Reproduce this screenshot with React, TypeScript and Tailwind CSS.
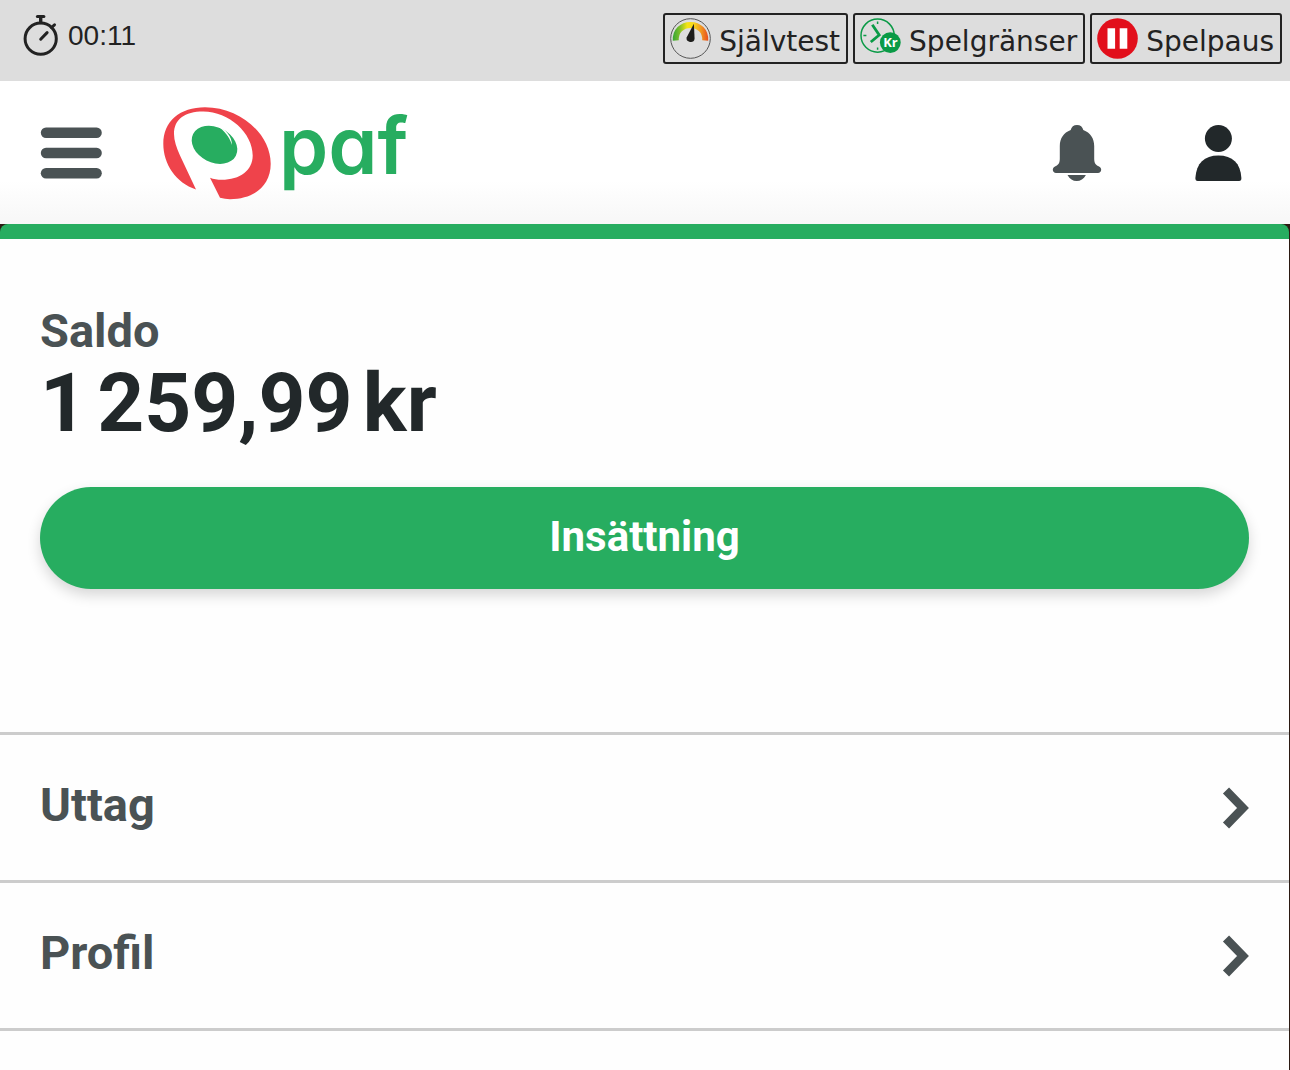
import React from 'react';

// icons
const StopwatchIcon: React.FC = () => (
    <svg width="38" height="44" viewBox="22 14 38 44" fill="none" stroke="#222" strokeWidth="3" strokeLinecap="round" aria-hidden="true">
        <circle cx="40.7" cy="38.7" r="15.6" />
        <path d="M37.4 16.5h6.5" />
        <path d="M40.7 17v5.5" strokeWidth="3.4" />
        <path d="M40.7 39.2l6.4-6.6" />
        <path d="M51.5 27.5l3-2.7" />
    </svg>
)

const GaugeIcon: React.FC = () => (
    <svg width="41" height="41" viewBox="0 0 41 41" fill="none" aria-hidden="true">
        <defs>
            <linearGradient id="gauge" x1="2" y1="0" x2="38" y2="0" gradientUnits="userSpaceOnUse">
                <stop offset="0" stopColor="#2fa336" />
                <stop offset="0.22" stopColor="#7fbf2a" />
                <stop offset="0.42" stopColor="#f4e414" />
                <stop offset="0.6" stopColor="#f8d71a" />
                <stop offset="0.8" stopColor="#f19a22" />
                <stop offset="1" stopColor="#e8501f" />
            </linearGradient>
        </defs>
        <circle cx="20.5" cy="20.5" r="19.8" stroke="#555" strokeWidth="1" />
        <path d="M5.8 22.5C5.2 13 12 6.9 20.5 6.9S35.8 13 35.2 22.5" stroke="url(#gauge)" strokeWidth="6" />
        <path d="M23.9 5.8L24.6 20.8a4 3.7 0 0 1-8-1.2z" fill="#1d1d1b" />
    </svg>
)

const LimitsIcon: React.FC = () => (
    <svg width="41" height="41" viewBox="0 0 41 41" fill="none" aria-hidden="true">
        <circle cx="17.6" cy="17.6" r="16.6" stroke="#0a9a46" strokeWidth="1.5" />
        <path d="M17.6 3.5v2.6M17.6 29.4v2.4M3.4 17.6h3M29.2 17.6h2" stroke="#0a9a46" strokeWidth="1.5" />
        <path d="M12.3 6.8L19.2 17 10.8 24" stroke="#0a9a46" strokeWidth="2.8" />
        <circle cx="30.3" cy="24.6" r="10.4" fill="#0a9a46" />
        <text x="30.4" y="29.2" textAnchor="middle" fill="#fff" fontSize="13" fontWeight="700" fontFamily="Open Sans, sans-serif">Kr</text>
    </svg>
)

const PauseIcon: React.FC = () => (
    <svg width="41" height="41" viewBox="0 0 41 41" aria-hidden="true">
        <circle cx="20.5" cy="20.5" r="20.3" fill="#e20f1b" />
        <path d="M10.5 10.3h7.6v20.4h-7.6zM22.7 10.3h7.6v20.4h-7.6z" fill="#fff" />
    </svg>
)

const MenuIcon: React.FC = () => (
    <svg width="62" height="52" viewBox="0 0 62 52" fill="#4a5254" aria-hidden="true">
        <rect x="0.8" y="0.5" width="61" height="10.4" rx="5.2" />
        <rect x="0.8" y="20.8" width="61" height="10.4" rx="5.2" />
        <rect x="0.8" y="41.1" width="61" height="10.4" rx="5.2" />
    </svg>
)

const BellIcon: React.FC = () => (
    <svg width="50" height="56" viewBox="0 0 50 56" fill="#4a5254" aria-hidden="true">
        <path d="M25 0c3.4 0 5.6 1.9 6.3 5C38.4 7.6 42.2 13.5 42.2 21v12.5c0 4.2 1.2 6.500 4.400 7.800 1.800.7 2.600 2 2.600 3.500 0 1.900-1.400 3.200-3.200 3.200H4c-1.800 0-3.200-1.300-3.200-3.200 0-1.500.8-2.800 2.600-3.500C6.600 40 7.800 37.700 7.800 33.500V21c0-7.500 3.800-13.400 10.900-16C19.400 1.900 21.600 0 25 0z" />
        <path d="M15.5 50h18.400c-2.300 4-5.400 6-9.200 6s-6.900-2-9.200-6z" />
    </svg>
)

const UserIcon: React.FC = () => (
    <svg width="47" height="56" viewBox="0 0 47 56" fill="#22282a" aria-hidden="true">
        <circle cx="23.4" cy="13.5" r="13.5" />
        <path d="M23.4 30.5C37.5 30.5 45.5 38 46.4 53c.1 2-.7 3-2.3 3H2.7C1.1 56 .3 55 .4 53 1.3 38 9.3 30.5 23.4 30.5z" />
    </svg>
)

const ChevronIcon: React.FC = () => (
    <svg width="27" height="42" viewBox="0 0 27 42" fill="none" stroke="#4a5254" strokeWidth="8.5" aria-hidden="true">
        <path d="M4 3.5L21 21 4 38.5" />
    </svg>
)

const Logo: React.FC = () => (
    <svg width="256" height="116" viewBox="0 -8 256 116" role="img" aria-label="paf">
        <path
            d="M34 86.5C14 80 1.3 61 1.3 40.8 1.3 18 18 4.2 43 4.2c35 0 65.7 26.8 65.7 56.6C108.7 83 92 96.2 68 96.2q-5 0-10-1.4L48 74.8c3.5 1.5 7.5 2 11.7 2C78 76.8 90.7 67.5 90.7 52.5 90.7 30 67 8.5 41.3 8.5 22.5 8.5 12 16.5 12 31c0 6.5 2.5 13.5 6 21.5z"
            fill="#ef434b"
        />
        <ellipse cx="52.5" cy="41.8" rx="24" ry="17.6" fill="#27ad60" transform="rotate(27 52.5 41.8)" />
        <path d="M55 22.5C64 26 69.8 33.5 70 42 67 33 63 28.5 55 22.5z" fill="#fff" />
        <text x="117" y="71" fill="#27ad60" fontSize="79" fontWeight="600" className="font-['Inter',sans-serif] [font-feature-settings:'cv11']">paf</text>
    </svg>
)

const tools = [
    { label: 'Självtest', icon: <GaugeIcon /> },
    { label: 'Spelgränser', icon: <LimitsIcon /> },
    { label: 'Spelpaus', icon: <PauseIcon /> },
]

const links = ['Uttag', 'Profil'];

const App: React.FC = () => {
    return (
        <div className="flex min-h-screen flex-col bg-[#2b1a12] font-['Roboto',sans-serif] text-[#4a5254]">
            <section className="flex h-[81px] items-start justify-between bg-[#ddd] pr-2 pl-[22px] text-[#222]">
                <div className="flex items-center gap-2 pt-[14px] font-['Liberation_Sans',sans-serif] text-[28px] leading-[44px]">
                    <StopwatchIcon />
                    <span>00:11</span>
                </div>
                <nav className="flex gap-[5px] pt-[13px] font-['DejaVu_Sans',sans-serif] text-[28px] [font-kerning:none]">
                    {tools.map((tool) => (
                        <a key={tool.label} href="#" className="flex h-[51px] items-start gap-2 rounded-[3px] border-2 border-[#222] pt-[3px] pr-[6px] pl-[5px]">
                            {tool.icon}
                            <span className="pt-1 leading-[40px]">{tool.label}</span>
                        </a>
                    ))}
                </nav>
            </section>

            <header className="flex h-[143px] items-center justify-between bg-linear-to-b from-white from-70% to-[#f7f7f7] pr-12 pl-10">
                <div className="flex items-center gap-[60px]">
                    <button type="button" aria-label="Meny">
                        <MenuIcon />
                    </button>
                    <a href="#">
                        <Logo />
                    </a>
                </div>
                <div className="flex items-center gap-[93px]">
                    <button type="button" aria-label="Meddelanden">
                        <BellIcon />
                    </button>
                    <button type="button" aria-label="Konto">
                        <UserIcon />
                    </button>
                </div>
            </header>

            <main className="mr-px flex-1 rounded-t-lg border-t-[15px] border-[#27ad60] bg-[#fefefe]">
                <section className="px-10 pt-16 pb-[143px]">
                    <h2 className="text-[47px] leading-[56px] font-bold">Saldo</h2>
                    <p className="text-[82px] leading-[88px] font-bold text-[#22282a]">1&#8239;259,99&#8239;kr</p>
                    <button type="button" className="mt-10 h-[102px] w-full rounded-full bg-[#27ad60] pb-1 text-[42px] font-bold text-white shadow-[0_6px_14px_rgba(0,0,0,0.16)]">
                        Insättning
                    </button>
                </section>
                <nav className="border-b-[3px] border-[#ccc]">
                    {links.map((link) => (
                        <a key={link} href="#" className="flex h-[148px] items-center justify-between border-t-[3px] border-[#ccc] px-10 text-[47px] font-bold">
                            <span className="pb-1">{link}</span>
                            <ChevronIcon />
                        </a>
                    ))}
                </nav>
            </main>
        </div>
    )
}

export default App;
